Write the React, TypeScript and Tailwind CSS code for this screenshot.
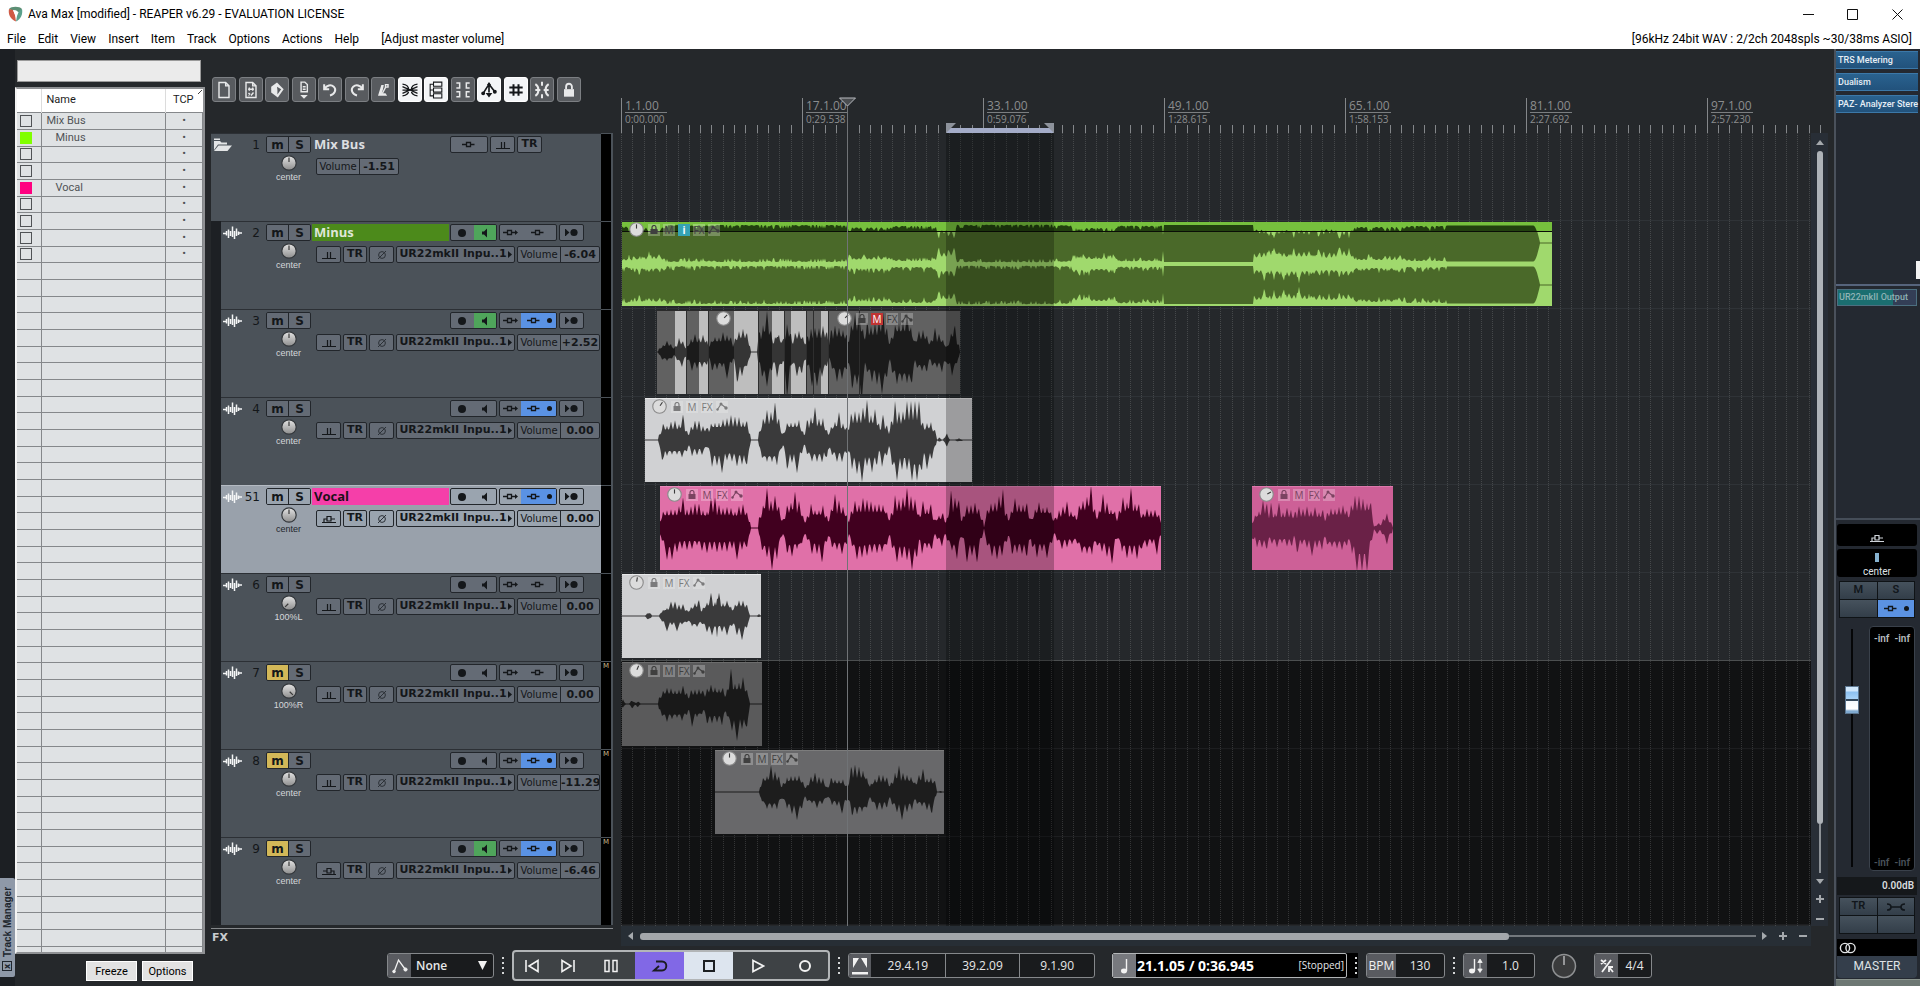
import { ReactNode } from "react";

type Blob = [number, number, number];

type Clip = {
  start: number;
  width: number;
  kind: "minus" | "light" | "mid" | "dark" | "pink" | "pinkMuted" | "split";
  angle: number;
  blobs: Blob[];
  seed: number;
};

type Track = {
  num: string;
  name?: string;
  folder?: boolean;
  selected?: boolean;
  muted?: boolean;
  monitor?: boolean;
  fx?: boolean;
  pan: string;
  angle: number;
  env: "trim" | "latch" | "touch";
  volume: string;
  clips: Clip[];
};

const BAR = 11.31;

const noise = (n: number) => {
  const v = Math.sin(n * 127.1 + 311.7) * 43758.5453;
  return v - Math.floor(v);
};

// amplitude of a clip at a timeline position, blobs are [from, to, peak]
const ampAt = (x: number, blobs: Blob[]) => {
  let amp = 0;
  for (const [from, to, peak] of blobs) {
    if (x < from || x > to) continue;
    const edge = Math.min(x - from, to - x) / Math.min(5, (to - from) / 2);
    amp = Math.max(amp, peak * Math.min(1, 0.35 + 0.65 * edge));
  }
  return amp;
};

// narrow peaks a few pixels apart, every cell has a height of its own
const spike = (x: number, cell: number, seed: number) => {
  const index = Math.floor(x / cell);
  const n = noise(index + seed * 13);
  const peak = n > 0.85 ? 1.22 : 0.66 + 0.4 * n;
  const away = Math.abs((x % cell) - Math.floor(cell / 2)) / (cell / 2);
  return Math.max(peak * (1 - 0.5 * away), 0.5);
};

const wavePath = (clip: Clip, mid: number) => {
  const up: string[] = [];
  const down: string[] = [];
  for (let x = 0; x <= clip.width; x++) {
    const t = clip.start + x;
    const amp = ampAt(t, clip.blobs);
    const a = amp * spike(t, 4, clip.seed);
    const b = amp * spike(t + 1, 5, clip.seed + 1) * 1.05;
    up.push(`${x},${(mid - Math.max(0.5, a)).toFixed(1)}`);
    down.unshift(`${x},${(mid + Math.max(0.5, b)).toFixed(1)}`);
  }
  return `M${up.join("L")}L${down.join("L")}Z`;
};

const minusBlobs: Blob[] = [
  [0, 12, 5], [12, 44, 8], [44, 226, 2.5], [226, 270, 8], [270, 315, 4.5], [315, 334, 14], [334, 432, 2],
  [432, 450, 3], [450, 496, 9], [496, 541, 4], [541, 632, 1], [632, 650, 12], [650, 690, 14],
  [690, 715, 12], [715, 732, 14], [732, 780, 7], [780, 825, 4.5], [825, 917, 1.5],
];

// loud mastered material: the wave fills each channel and leaves only a gap at the edges
const channelPath = (width: number, mid: number, seed: number) => {
  const up: string[] = [];
  const down: string[] = [];
  for (let x = 0; x <= width; x++) {
    let gap = 1;
    for (const [from, to, g] of minusBlobs) {
      if (x >= from && x < to) gap = g;
    }
    const jump = gap > 1.5 && noise(x * 7 + seed) > 0.82 ? 3 : 0;
    gap = gap * (gap > 1.5 ? 0.9 * spike(x, 5, seed) : 1) + jump + 0.9;
    if (x === 541) gap = 13;
    if (x > 911) gap = Math.min(20.4, gap + Math.pow(x - 911, 2) / 2.5);
    const h = Math.max(0.5, 21 - gap);
    up.push(`${x},${(mid - h).toFixed(1)}`);
    down.unshift(`${x},${(mid + h).toFixed(1)}`);
  }
  return `M${up.join("L")}L${down.join("L")}Z`;
};

const vocalBlobs: Blob[] = [
  [38, 129, 25], [138, 161, 33], [162, 184, 30], [185, 207, 27], [207, 228, 28], [228, 269, 31],
  [269, 300, 33], [296, 314, 28], [312, 326, 18], [325, 341, 31], [340, 362, 27], [364, 387, 32],
  [387, 410, 31], [410, 433, 30], [433, 458, 22], [455, 476, 35], [474, 497, 28], [496, 522, 33],
  [519, 541, 21],
];

const tracks: Track[] = [
  { num: "1", name: "Mix Bus", folder: true, pan: "center", angle: 0, env: "trim", volume: "-1.51", clips: [] },
  {
    num: "2", name: "Minus", monitor: true, pan: "center", angle: 0, env: "trim", volume: "-6.04",
    clips: [{ start: 1, width: 930, kind: "minus", angle: 0, seed: 3, blobs: [] }],
  },
  {
    num: "3", monitor: true, fx: true, pan: "center", angle: 0, env: "trim", volume: "+2.52",
    clips: [{
      start: 36, width: 303, kind: "split", angle: 45, seed: 11,
      blobs: [
        [38, 54, 12], [53, 66, 15], [65, 89, 19], [87, 113, 21], [112, 129, 27], [137, 153, 34],
        [151, 162, 30], [162, 171, 38], [170, 185, 26], [185, 208, 27], [208, 228, 30], [227, 245, 42],
        [243, 269, 33], [270, 294, 41], [292, 310, 25], [308, 326, 20], [326, 338, 25],
      ],
    }],
  },
  {
    num: "4", fx: true, pan: "center", angle: 0, env: "trim", volume: "0.00",
    clips: [{
      start: 24, width: 327, kind: "light", angle: 35, seed: 23,
      blobs: [
        [38, 68, 21], [66, 88, 16], [86, 129, 26], [138, 161, 31], [162, 183, 26], [184, 207, 27],
        [207, 228, 23], [226, 260, 33], [256, 269, 21], [269, 304, 32], [300, 315, 23], [317, 320, 4],
        [323, 328, 8], [334, 342, 2],
      ],
    }],
  },
  {
    num: "51", name: "Vocal", selected: true, fx: true, pan: "center", angle: 0, env: "touch", volume: "0.00",
    clips: [
      { start: 39, width: 501, kind: "pink", angle: 0, seed: 31, blobs: vocalBlobs },
      {
        start: 631, width: 141, kind: "pinkMuted", angle: 60, seed: 47,
        blobs: [[631, 650, 23], [645, 675, 21], [672, 706, 22], [704, 730, 26], [726, 752, 34], [752, 761, 5], [760, 771, 16]],
      },
    ],
  },
  {
    num: "6", pan: "100%L", angle: -135, env: "trim", volume: "0.00",
    clips: [{
      start: 1, width: 139, kind: "light", angle: 10, seed: 53,
      blobs: [[25, 30, 5], [39, 68, 12], [66, 82, 15], [80, 113, 19], [94, 98, 28], [110, 128, 19], [136, 140, 2]],
    }],
  },
  {
    num: "7", muted: true, pan: "100%R", angle: 135, env: "trim", volume: "0.00",
    clips: [{
      start: 1, width: 140, kind: "dark", angle: 25, seed: 61,
      blobs: [[0, 4, 6], [9, 14, 5], [15, 19, 4], [38, 68, 20], [66, 84, 18], [82, 106, 23], [104, 128, 29]],
    }],
  },
  {
    num: "8", muted: true, fx: true, pan: "center", angle: 0, env: "trim", volume: "-11.29",
    clips: [{
      start: 94, width: 229, kind: "mid", angle: 0, seed: 71,
      blobs: [
        [139, 161, 22], [161, 184, 22], [184, 207, 16], [206, 227, 17], [227, 249, 28], [248, 270, 19],
        [269, 296, 22], [292, 315, 19], [318, 321, 2],
      ],
    }],
  },
  { num: "9", muted: true, monitor: true, fx: true, pan: "center", angle: 0, env: "latch", volume: "-6.46", clips: [] },
];

const rulerMarks = [
  { bar: 0, pos: "1.1.00", time: "0:00.000" },
  { bar: 16, pos: "17.1.00", time: "0:29.538" },
  { bar: 32, pos: "33.1.00", time: "0:59.076" },
  { bar: 48, pos: "49.1.00", time: "1:28.615" },
  { bar: 64, pos: "65.1.00", time: "1:58.153" },
  { bar: 80, pos: "81.1.00", time: "2:27.692" },
  { bar: 96, pos: "97.1.00", time: "2:57.230" },
];

const bars = Array.from({ length: 107 }, (_, i) => i);

const managerRows = [
  { name: "Mix Bus" },
  { name: "Minus", color: "green" },
  {},
  {},
  { name: "Vocal", color: "pink" },
  {}, {}, {}, {},
] as { name?: string; color?: string }[];

/* ---------- small drawings ---------- */

function Knob({ angle, size, flat }: { angle: number; size: number; flat?: boolean }) {
  return (
    <svg width={size} height={size} viewBox="0 0 16 16" className="block">
      <defs>
        <linearGradient id="knob" x1="0" y1="0" x2="0" y2="1">
          <stop offset="0" stopColor="#e4e4e4" />
          <stop offset="1" stopColor="#8d8d8d" />
        </linearGradient>
      </defs>
      <circle cx="8" cy="8" r="7.2" fill={flat ? "#dcdcdc" : "url(#knob)"} stroke={flat ? "#8b8b8b" : "#33373b"} strokeWidth="1.2" />
      <line x1="8" y1="7" x2="8" y2="2.5" stroke="#3a3a3a" strokeWidth="1.2" transform={`rotate(${angle} 8 8)`} />
    </svg>
  );
}

function EnvIcon({ mode }: { mode: Track["env"] }) {
  return (
    <svg width="16" height="12" viewBox="0 0 16 12" fill="none" stroke="currentColor" strokeWidth="1.2">
      {mode === "trim" && <path d="M1 9.5H15M6.5 9V3M9.5 9V3" />}
      {mode === "touch" && <path d="M1 9.5H15M3 9V6H6M6 3.5H10V8H6ZM10 6H14" />}
      {mode === "latch" && <path d="M1 9.5H15M2 6H6M6 3.5H10V8H6ZM10 6H13V9" />}
    </svg>
  );
}

function FxNode({ arrow }: { arrow?: boolean }) {
  return (
    <svg width="17" height="9" viewBox="0 0 17 9" fill="none" stroke="currentColor" strokeWidth="1.3">
      <path d="M1 4.5H5M5.5 2.5H9.5V6.5H5.5ZM10 4.5H13.5" />
      {arrow && <path d="M13 2L16 4.5L13 7Z" fill="currentColor" stroke="none" />}
    </svg>
  );
}

function WaveGlyph() {
  return (
    <svg width="19" height="14" viewBox="0 0 19 14" stroke="#f4f5f6" strokeWidth="1.5" fill="none">
      <path d="M0 7.5H3M3.5 5V9.5M5.5 3.5V12M7.5 5V10M9.5 0.5V11M11.5 5V13M13.5 2.5V10M15.5 5.5V9M16 7H19" />
    </svg>
  );
}

function FolderGlyph() {
  return (
    <svg width="20" height="14" viewBox="0 0 20 14" fill="#e3e5e6">
      <path d="M1 3H7L8.5 4.5H14V6.5H5L1 12Z" />
      <path d="M5.5 7.5H19L14.5 13H1Z" />
      <path d="M1 0.5H7V2H1Z" />
    </svg>
  );
}

function LockGlyph() {
  return (
    <svg width="8" height="9" viewBox="0 0 8 9" fill="currentColor">
      <path d="M0.5 4H7.5V9H0.5Z" />
      <path d="M2 4V2.5A2 2 0 0 1 6 2.5V4" fill="none" stroke="currentColor" strokeWidth="1.2" />
    </svg>
  );
}

function NodesGlyph() {
  return (
    <svg width="12" height="9" viewBox="0 0 12 9" fill="currentColor" stroke="currentColor">
      <path d="M1.5 7.5L5 2L9.5 5.5" fill="none" strokeWidth="1.1" />
      <circle cx="1.5" cy="7.5" r="1.2" stroke="none" />
      <circle cx="5" cy="2" r="1.5" stroke="none" />
      <circle cx="10" cy="6" r="1.7" stroke="none" />
    </svg>
  );
}

function NoteGlyph({ arrows }: { arrows?: boolean }) {
  return (
    <svg width="18" height="18" viewBox="0 0 18 18" fill="#f2f2f2" stroke="#f2f2f2">
      <ellipse cx={arrows ? 5 : 8} cy="14" rx="3" ry="2.4" stroke="none" />
      <path d={arrows ? "M7.5 14V2" : "M10.5 14V2"} strokeWidth="1.4" />
      {arrows && <path d="M13 4V13M10.8 5.5L13 2L15.2 5.5ZM10.8 12L13 15.5L15.2 12Z" strokeWidth="0.8" />}
    </svg>
  );
}

/* ---------- top toolbar ---------- */

const tools: { label: string; on?: boolean; art: ReactNode }[] = [
  { label: "New project", art: <path d="M6 3H14L18 7V21H6ZM14 3V7H18" /> },
  { label: "Project settings", art: <path d="M6 3H14L18 7V21H6ZM14 3V7H18M10 9V13M14 9V13M8.5 11H15.5M9 15.5L11 17.5M15 15L12 18.5M9 18.5H10" /> },
  { label: "Open project", art: <><path d="M5 8L12 3L20 11L13 21L5 15Z" fill="currentColor" stroke="none" /><path d="M12 8L17 11L12.5 17.5V12Z" fill="#585b5f" stroke="none" /></> },
  { label: "Save project", art: <><path d="M8.5 2.5H13L16 5.5V14H8.5ZM10.5 8H14M10.5 11H14" /><path d="M7.5 18H16.5L12 22.5Z" fill="currentColor" stroke="none" /></> },
  { label: "Undo", art: <path d="M5 5V11H11M5.5 10.5C8 6.5 13 5 16.5 8C20 11.5 18 17 12 18.5" strokeWidth="2.4" /> },
  { label: "Redo", art: <path d="M19 5V11H13M18.5 10.5C16 6.5 11 5 7.5 8C4 11.5 6 17 12 18.5" strokeWidth="2.4" /> },
  { label: "Metronome", art: <><path d="M10 6H13L12 11L10.5 16H15L17 19H6Z" fill="currentColor" stroke="none" /><path d="M11 16.5L15.5 8M15 5.5H18V8.5H15Z" /></> },
  { label: "Auto crossfade", on: true, art: <path d="M3 5C13 6 13 18 3 19M21 5C11 6 11 18 21 19M3 12H21M3 8L21 16M3 16L21 8" strokeWidth="1.5" /> },
  { label: "Item grouping", on: true, art: <path d="M9 2.5H19V7.5H9ZM9 9.5H19V14.5H9ZM9 16.5H19V21.5H9ZM9 5H5V19H9M5 12H9" strokeWidth="1.3" /> },
  { label: "Ripple editing", art: <path d="M4 3.5H8V9.5H4M4 14H8V20H4M20 3.5H16V9.5H20M20 14H16V20H20" strokeWidth="1.8" /> },
  { label: "Move envelope points", on: true, art: <><path d="M5 16L12 5L19 14M12 6V15" strokeWidth="2" /><path d="M12 21L8 15.5H16ZM12 2.5L14.5 6H9.5Z" fill="currentColor" stroke="none" /><circle cx="5" cy="16" r="1.5" fill="currentColor" /><circle cx="19" cy="14" r="1.5" fill="currentColor" /></> },
  { label: "Grid lines", on: true, art: <path d="M9 5V19M15 5V19M4 9H20M4 15H20" strokeWidth="2.4" /> },
  { label: "Snap", art: <path d="M4 5C9 8 9 16 4 19M20 5C15 8 15 16 20 19M12 2V7M12 17V22M4 12H10M14 12H20" strokeWidth="2.4" /> },
  { label: "Lock", art: <><path d="M6 11H18V20H6Z" fill="currentColor" stroke="none" /><path d="M8.5 11V8A3.5 3.5 0 0 1 15.5 8V11" strokeWidth="2.2" /></> },
];

function Toolbar() {
  return (
    <div className="flex w-[414px] shrink-0 items-start pt-7 pl-[5px]">
      <div className="flex w-[369px] justify-between">
        {tools.map((tool) => (
          <button
            key={tool.label}
            aria-label={tool.label}
            className={`flex h-[25px] w-6 items-center justify-center rounded-[3px] border ${
              tool.on ? "border-white bg-[#f3f5f7] text-[#14171a]" : "border-[#7c7f83] bg-[#585b5f] text-[#e8e9ea]"
            }`}
          >
            <svg width="20" height="20" viewBox="0 0 24 24" fill="none" stroke="currentColor" strokeWidth="1.7">
              {tool.art}
            </svg>
          </button>
        ))}
      </div>
    </div>
  );
}

/* ---------- track control panel ---------- */

function Cell({ className, label, children }: { className: string; label: string; children: ReactNode }) {
  return (
    <button aria-label={label} className={`flex h-[17px] items-center justify-center rounded-[2px] border border-[#22262b] ${className}`}>
      {children}
    </button>
  );
}

function TrackPanel({ track }: { track: Track }) {
  const face = track.selected ? "bg-[#9aa4af]" : "bg-[#646b75]";
  const volume = (
    <div className={`flex h-[17px] w-[83px] overflow-hidden rounded-[2px] border border-[#22262b] ${face}`}>
      <span className="w-[43px] shrink-0 border-r border-[#22262b] text-center text-[10px] leading-[15px]">Volume</span>
      <span className="flex-1 text-center text-[11px] leading-[15px] font-bold whitespace-nowrap">{track.volume}</span>
    </div>
  );

  return (
    <div className={`flex h-22 ${track.folder ? "" : "pl-[10px]"}`}>
      <div
        className={`flex flex-1 border-t text-[#14171a] ${
          track.selected ? "border-[#b4bac2] bg-[#99a1ab]" : "border-[#2c3035] bg-[#4b5259]"
        }`}
      >
        <div className={`flex h-5 items-center justify-between pt-0.5 pr-[6px] pl-[2px] ${track.folder ? "w-[55px]" : "w-[45px]"}`}>
          {track.folder ? <FolderGlyph /> : <WaveGlyph />}
          <span className="text-[12px] leading-4">{track.num}</span>
        </div>
        <div className="flex w-[45px] flex-col items-center pt-0.5">
          <div className="flex h-[17px] w-full overflow-hidden rounded-[2px] border border-[#22262b] text-[12px] leading-[14px] font-bold">
            <button aria-label="Mute" className={`flex-1 border-r border-[#22262b] ${track.muted ? "bg-[#d3b858]" : face}`}>m</button>
            <button aria-label="Solo" className={`flex-1 ${face}`}>S</button>
          </div>
          <button aria-label="Pan" className="mt-[2px]"><Knob angle={track.angle} size={16} /></button>
          <span className={`font-['Liberation_Sans',sans-serif] text-[9px] leading-3 ${track.selected ? "text-[#22262b]" : "text-[#d5d7d9]"}`}>{track.pan}</span>
        </div>
        <div className="ml-px flex flex-col gap-[5px] pt-0.5">
          <div className="flex">
            <span
              className={`mr-px h-[17px] w-[137px] pl-[2px] font-['Open_Sans',sans-serif] text-[13px] leading-[17px] font-bold ${
                track.name === "Minus"
                  ? "bg-[#4c8a1b] text-[#dfe6d8]"
                  : track.name === "Vocal"
                    ? "bg-[#f53fa9] text-[#1d1018]"
                    : "text-[#dcdee0]"
              }`}
            >
              {track.name}
            </span>
            {track.folder ? (
              <div className="flex gap-[2px]">
                <Cell label="FX" className={`w-[38px] ${face}`}><FxNode /></Cell>
                <Cell label="Envelope" className={`w-[25px] ${face}`}><EnvIcon mode="trim" /></Cell>
                <Cell label="Trim mode" className={`w-[25px] text-[11px] font-bold ${face}`}>TR</Cell>
              </div>
            ) : (
              <div className="flex gap-[2px]">
                <div className={`flex h-[17px] w-[47px] overflow-hidden rounded-[2px] border border-[#22262b] ${face}`}>
                  <button aria-label="Record arm" className="flex flex-1 items-center justify-center">
                    <span className="size-2 rounded-full bg-[#14171a]" />
                  </button>
                  <button aria-label="Monitor" className={`flex flex-1 items-center justify-center ${track.monitor ? "bg-[#4fa55b]" : ""}`}>
                    <svg width="8" height="10" viewBox="0 0 8 10" fill="#14171a"><path d="M1 3.5H3L6 0.5V9.5L3 6.5H1Z" /></svg>
                  </button>
                </div>
                <div className={`flex h-[17px] w-[58px] overflow-hidden rounded-[2px] border border-[#22262b] ${face}`}>
                  <button aria-label="Routing" className="flex w-[21px] items-center justify-center"><FxNode arrow /></button>
                  <button aria-label="Effects" className={`flex flex-1 items-center justify-center gap-1 ${track.fx ? "bg-[#5a92e4]" : ""}`}>
                    <FxNode />
                    {track.fx && <span className="size-[5px] rounded-full bg-[#14171a]" />}
                  </button>
                </div>
                <Cell label="Record mode" className={`w-[25px] ${face}`}>
                  <svg width="14" height="9" viewBox="0 0 14 9" fill="#14171a">
                    <path d="M0 1H1.2V8H0ZM1 1.5L4.5 4.5L1 7.5Z" /><circle cx="9" cy="4.5" r="3.6" />
                  </svg>
                </Cell>
              </div>
            )}
          </div>
          <div className="flex gap-[2px] pl-1">
            {!track.folder && (
              <>
                <Cell label="Envelope" className={`w-[25px] ${face}`}><EnvIcon mode={track.env} /></Cell>
                <Cell label="Trim mode" className={`w-6 text-[11px] font-bold ${face}`}>TR</Cell>
                <Cell label="Phase" className={`w-[25px] text-[11px] ${face}`}>
                  <svg width="10" height="10" viewBox="0 0 10 10" fill="none" stroke="#2b3036" strokeWidth="1"><circle cx="5" cy="5" r="3.4" /><path d="M1 9L9 1" /></svg>
                </Cell>
                <Cell label="Input" className={`w-[119px] gap-px text-[11px] font-bold whitespace-nowrap ${face}`}>
                  UR22mkII Inpu..1
                  <svg width="4" height="7" viewBox="0 0 4 7" fill="#14171a"><path d="M0 0L4 3.5L0 7Z" /></svg>
                </Cell>
              </>
            )}
            {volume}
          </div>
        </div>
      </div>
      <div className="h-full w-3 border-t border-r-2 border-[#4b5259] bg-black text-center text-[7px] leading-[9px] text-[#c7b98a]">
        {track.muted ? "M" : ""}
      </div>
    </div>
  );
}

/* ---------- arrange view ---------- */

const kindStyle: Record<Clip["kind"], string> = {
  minus: "border-[#8fd158] bg-[#a0d96d]",
  light: "border-[#e8e9ea] bg-[#d0d1d3]",
  mid: "border-[#7c7c7c] bg-[#68686a]",
  dark: "border-[#6c6c6c] bg-[#5a5a5b]",
  pink: "border-[#e88abb] bg-[#e070a8]",
  pinkMuted: "border-[#dd78ac] bg-[#cd6097]",
  split: "border-[#2a2a2a] bg-[#616161]",
};

const splitLight: [number, number][] = [[18, 11], [42, 9], [77, 24], [115, 12], [134, 15], [164, 7]];
const splitCuts = [29, 51, 101, 127, 149, 156, 171, 202];

function ClipButtons({ kind, angle }: { kind: Clip["kind"]; angle: number }) {
  const box = "flex size-3 items-center justify-center font-['Open_Sans',sans-serif] text-[10px] leading-3";
  const face = kind === "light" ? "bg-white/20 text-[#7b7b7c]" : kind === "pink" || kind === "pinkMuted" ? "bg-white/25 text-[#7b4361]" : "bg-white/25 text-[#3f3f3f]";
  return (
    <div className={`absolute top-0 flex items-center gap-[3px] ${kind === "split" ? "left-[180px]" : "left-[7px]"}`}>
      <span className="mr-[1px]"><Knob angle={angle} size={15} flat /></span>
      <button aria-label="Lock item" className={`${box} ${face}`}><LockGlyph /></button>
      <button aria-label="Mute item" className={`${box} ${kind === "split" ? "bg-[#c03434] text-white" : face}`}>M</button>
      {kind === "minus" && <button aria-label="Notes" className={`${box} bg-[#35a3b4] font-bold text-white`}>i</button>}
      <button aria-label="Item FX" className={`${box} ${face}`}>FX</button>
      <button aria-label="Item envelopes" className={`${box} ${face}`}><NodesGlyph /></button>
    </div>
  );
}

function ClipView({ clip }: { clip: Clip }) {
  const waveFill = clip.kind === "pink" ? "#41001f" : clip.kind === "pinkMuted" ? "#6a2147" : "#000";
  return (
    <div
      className={`absolute top-px h-[84px] overflow-hidden ${clip.kind === "minus" ? "" : "border-t"} ${kindStyle[clip.kind]}`}
      style={{ left: clip.start, width: clip.width }}
    >
      <svg width={clip.width} height="84" className="block">
        {clip.kind === "minus" ? (
          <>
            <path d={channelPath(clip.width, 21, 5)} fill="#4a6929" />
            <path d={channelPath(clip.width, 63, 9)} fill="#4a6929" />
            <clipPath id="aboveVolume"><rect width={clip.width} height="10" /></clipPath>
            <g clipPath="url(#aboveVolume)">
              <rect width={clip.width} height="10" fill="#76c03d" />
              <path d={channelPath(clip.width, 22, 5)} fill="#22400f" />
            </g>
            <rect y="9" width={clip.width} height="1" fill="#0a0d07" />
          </>
        ) : (
          <>
            {clip.kind === "split" && splitLight.map(([x, w]) => <rect key={x} x={x} width={w} height="84" fill="#bebebe" />)}
            <path d={wavePath(clip, 41)} fill={waveFill} opacity={waveFill === "#000" ? 0.72 : 1} />
            {clip.kind === "split" && splitCuts.map((x) => <rect key={x} x={x} width="1" height="84" fill="#2e2e2e" />)}
          </>
        )}
      </svg>
      {clip.kind === "split" && <span className="absolute top-0 left-[59px]"><Knob angle={45} size={15} flat /></span>}
      <ClipButtons kind={clip.kind} angle={clip.angle} />
    </div>
  );
}

function Ruler() {
  return (
    <div className="relative flex-1 overflow-hidden font-['Open_Sans',sans-serif] text-[#8b8d8e]">
      {bars.map((bar) => (
        <span key={bar} className={`absolute bottom-0 w-px bg-[#84878a] ${bar % 16 === 0 ? "h-[35px]" : "h-2"}`} style={{ left: Math.round(bar * BAR) }} />
      ))}
      {rulerMarks.map((mark) => (
        <div key={mark.bar} className="absolute top-[50px] w-[42px] whitespace-nowrap" style={{ left: Math.round(mark.bar * BAR) + 4 }}>
          <div className="border-b border-[#7b7e80] text-[12px] leading-[13px]">{mark.pos}</div>
          <div className="text-[10px] leading-[13px]">{mark.time}</div>
        </div>
      ))}
      <div className="absolute bottom-0 left-[325px] h-[5px] w-[108px] bg-[#a4acc8]" />
      <svg className="absolute bottom-0 left-[325px]" width="108" height="10" fill="#8d929b"><path d="M0 0H10L1 9V10H0ZM108 0H98L107 9V10H108Z" /></svg>
      <svg className="absolute bottom-0 left-[217px]" width="19" height="36" fill="none">
        <path d="M1.5 1H17.5L9.5 9Z" fill="#4a4d50" stroke="#b9bbc0" /><path d="M9.5 9V36" stroke="#707376" />
      </svg>
    </div>
  );
}

function Arrange() {
  return (
    <div className="relative min-w-0 flex-1 overflow-hidden bg-[#25282b]">
      {tracks.map((track, i) => (
        <div key={track.num} className={`h-22 border-b ${i > 5 ? "border-[#1d1e20] bg-[#111213]" : i === 5 ? "border-[#4c4f50]" : "border-[#2f3337]"}`} />
      ))}
      <svg className="absolute inset-0 size-full">
        {bars.map((bar) => (
          <line key={bar} x1={Math.round(bar * BAR) + 0.5} x2={Math.round(bar * BAR) + 0.5} y1="0" y2="100%" stroke="#fff" strokeOpacity="0.15" strokeDasharray="1 1" />
        ))}
      </svg>
      <div className="absolute inset-x-0 top-0">
        {tracks.map((track) => (
          <div key={track.num} className="relative h-22">
            {track.clips.map((clip) => <ClipView key={clip.start} clip={clip} />)}
          </div>
        ))}
      </div>
      <div className="absolute inset-y-0 left-[325px] w-[108px] bg-black/25" />
      <div className="absolute inset-y-0 left-[226px] w-px bg-[#707376]" />
    </div>
  );
}

/* ---------- transport ---------- */

function Dots() {
  return (
    <span className="flex w-[18px] flex-col items-center gap-[3px]">
      {[0, 1, 2, 3].map((i) => <i key={i} className="size-[2px] bg-[#d3d5d6]" />)}
    </span>
  );
}

const boxEdge = "flex h-[25px] overflow-hidden rounded-[3px] border border-[#85888b] bg-[#191b1d]";
const iconFace = "flex items-center justify-center bg-[#595b60] text-[#f2f2f2]";

function Transport() {
  const key = "flex items-center justify-center text-[#f2f2f2]";
  return (
    <div className="flex h-10 items-center pb-px pl-[180px] font-['Open_Sans',sans-serif] text-[13px] text-[#e6e7e8]">
      <div className={`${boxEdge} relative w-[107px]`}>
        <span className={`${iconFace} w-[23px]`}>
          <svg width="18" height="18" viewBox="0 0 18 18" fill="#f2f2f2" stroke="#f2f2f2"><path d="M3 15L7.5 3L14 12" fill="none" strokeWidth="1.3" /><circle cx="3" cy="14.5" r="1.3" /><circle cx="14.5" cy="12.5" r="1.6" /></svg>
        </span>
        <select aria-label="Automation override" className="flex-1 appearance-none pl-[5px] text-[12px] font-semibold">
          <option>None</option>
        </select>
        <svg className="pointer-events-none absolute top-[7px] right-[6px]" width="9" height="9" fill="#f2f2f2"><path d="M0 0H9L4.5 9Z" /></svg>
      </div>
      <Dots />
      <div className="flex h-[31px] w-[318px] overflow-hidden rounded-[4px] border-2 border-[#b2b5b7] bg-[#3e4245]">
        <button aria-label="Go to start" className={`${key} w-9`}>
          <svg width="16" height="16" viewBox="0 0 16 16" fill="none" stroke="currentColor" strokeWidth="1.6"><path d="M2 2V14M14 2.5V13.5L5 8Z" /></svg>
        </button>
        <button aria-label="Go to end" className={`${key} w-9`}>
          <svg width="16" height="16" viewBox="0 0 16 16" fill="none" stroke="currentColor" strokeWidth="1.6"><path d="M14 2V14M2 2.5V13.5L11 8Z" /></svg>
        </button>
        <button aria-label="Pause" className={`${key} w-[49px]`}>
          <svg width="16" height="16" viewBox="0 0 16 16" fill="none" stroke="currentColor" strokeWidth="1.5"><path d="M2 2.5H6V13.5H2ZM10 2.5H14V13.5H10Z" /></svg>
        </button>
        <button aria-label="Repeat" className="flex w-[49px] items-center justify-center bg-[#8168e6] text-[#1c1c22]">
          <svg width="18" height="16" viewBox="0 0 18 16" fill="none" stroke="currentColor" strokeWidth="1.9"><path d="M5 3.5H11C17 3.5 16.5 12.5 11 12.5H3L8 8" /></svg>
        </button>
        <button aria-label="Stop" className="flex w-[49px] items-center justify-center bg-[#dde5ef]">
          <span className="size-3 border-2 border-[#1c1f22]" />
        </button>
        <button aria-label="Play" className={`${key} w-[49px]`}>
          <svg width="16" height="16" viewBox="0 0 16 16" fill="none" stroke="currentColor" strokeWidth="1.7"><path d="M3 2.5L13.5 8L3 13.5Z" /></svg>
        </button>
        <button aria-label="Record" className={`${key} flex-1`}>
          <span className="size-3 rounded-full border-2 border-[#f2f2f2]" />
        </button>
      </div>
      <Dots />
      <div className={`${boxEdge} w-[247px] text-[12px]`}>
        <span className={`${iconFace} w-[22px]`}>
          <svg width="18" height="20" viewBox="0 0 18 20" fill="#f2f2f2"><path d="M2 12V2H8ZM16 12V2H10Z" /><path d="M1 16H17V18.5H1Z" /></svg>
        </span>
        <span className="flex-1 border-r border-[#85888b] text-center leading-[24px]">29.4.19</span>
        <span className="flex-1 border-r border-[#85888b] text-center leading-[24px]">39.2.09</span>
        <span className="flex-1 text-center leading-[24px]">9.1.90</span>
      </div>
      <div className="ml-[17px] flex h-[25px] items-center bg-black pr-px">
        <div className="flex h-[25px] w-[235px] overflow-hidden rounded-[2px] border border-[#b2b5b7] bg-black">
          <span className="flex w-[23px] items-center justify-center bg-[#77797e]"><NoteGlyph /></span>
          <span className="flex-1 pl-px text-[14px] leading-[23px] font-bold whitespace-nowrap text-white">21.1.05 / 0:36.945</span>
          <span className="pr-0.5 text-[10px] leading-[23px]">[Stopped]</span>
        </div>
        <span className="-mr-2"><Dots /></span>
      </div>
      <div className={`${boxEdge} ml-2 w-[79px]`}>
        <span className={`${iconFace} w-[29px] text-[12px]`}>BPM</span>
        <span className="flex-1 text-center text-[12px] leading-[23px]">130</span>
      </div>
      <Dots />
      <div className={`${boxEdge} w-[72px]`}>
        <span className={`${iconFace} w-[23px]`}><NoteGlyph arrows /></span>
        <span className="flex-1 text-center text-[12px] leading-[23px]">1.0</span>
      </div>
      <button aria-label="Play rate" className="ml-4">
        <svg width="26" height="26" viewBox="0 0 26 26"><circle cx="13" cy="13" r="11.5" fill="#3a3b3c" stroke="#8f9193" strokeWidth="1.5" /><path d="M13 12V3" stroke="#b5b6b7" strokeWidth="1.5" /></svg>
      </button>
      <div className={`${boxEdge} ml-[17px] w-[58px]`}>
        <span className={`${iconFace} w-[23px]`}>
          <svg width="16" height="16" viewBox="0 0 16 16" fill="none" stroke="#f2f2f2" strokeWidth="1.8"><path d="M3 14L12 2M2 2L7 6M7 2L2 6M14 9H10V14M10 9L14 14" /></svg>
        </span>
        <span className="flex-1 text-center text-[12px] leading-[23px]">4/4</span>
      </div>
    </div>
  );
}

/* ---------- master strip ---------- */

function Master() {
  const half = "flex h-[17px] items-center justify-center bg-linear-to-b from-[#46525d] to-[#333e49] text-[11px] font-semibold text-[#11161b]";
  return (
    <div className="flex w-[86px] shrink-0 flex-col border-l-2 border-[#4a515b] bg-[#242931] font-[Roboto,sans-serif]">
      <div className="flex h-[237px] flex-col gap-1 border-b-2 border-[#56647c] pt-0.5 pr-0.5">
        {["TRS Metering", "Dualism", "PAZ- Analyzer Stere"].map((fx) => (
          <button key={fx} className="h-[18px] border-y border-[#3c78a8] bg-linear-to-b from-[#2a628f] to-[#22527c] pl-0.5 text-left text-[9px] leading-4 font-medium whitespace-nowrap text-[#e6eef5]">
            {fx}
          </button>
        ))}
        <span className="mt-36 -mr-0.5 h-[18px] w-1 self-end bg-[#f4f4f4]" />
      </div>
      <div className="h-[234px] border-b-2 border-[#454d58] pt-[3px] pr-[3px] pl-px">
        <button className="flex h-[17px] w-full items-center border border-[#4c6f80] bg-linear-to-r from-[#1b6e70] from-70% to-[#333e56] to-70% pl-px text-[9px] font-medium whitespace-nowrap text-[#8fb3b5]">
          UR22mkII Output
        </button>
      </div>
      <div className="flex flex-col px-px pr-[3px]">
        <button aria-label="Master envelope" className="mt-1 flex h-[22px] items-end justify-center rounded-[3px] bg-black pb-0.5 text-[#cfd4da]"><EnvIcon mode="touch" /></button>
        <div className="mt-[3px] flex h-7 flex-col items-center rounded-[3px] bg-black pt-1 text-[10px] leading-3 text-[#dfe2e5]">
          <span className="mb-1 h-[9px] w-1 shrink-0 bg-[#86b2cf]" />
          center
        </div>
        <div className="mx-0.5 mt-1 grid grid-cols-2 gap-px border border-[#0f1316] bg-[#0f1316]">
          <button className={half}>M</button>
          <button className={half}>S</button>
          <button aria-label="Mono" className={half} />
          <button aria-label="Master FX" className="flex h-[17px] items-center justify-center gap-1 bg-[#5b92e2] text-[#11161b]"><FxNode /><span className="size-[5px] rounded-full bg-[#11161b]" /></button>
        </div>
        <div className="mt-2 flex h-[245px] pr-0.5 pl-2">
          <input
            type="range"
            aria-label="Master volume"
            defaultValue={73}
            className="mt-[3px] h-[238px] w-3.5 appearance-none bg-[linear-gradient(90deg,transparent_6px,#050608_6px,#050608_8px,transparent_8px)] [direction:rtl] [writing-mode:vertical-lr] [&::-webkit-slider-thumb]:h-7 [&::-webkit-slider-thumb]:w-3.5 [&::-webkit-slider-thumb]:appearance-none [&::-webkit-slider-thumb]:border [&::-webkit-slider-thumb]:border-[#5c7690] [&::-webkit-slider-thumb]:bg-[linear-gradient(#cfe6fb_4px,#8cc0f0_5px,#a9d3f8_12px,#33475a_12px,#33475a_14px,#f4f9fd_14px,#ffffff_22px,#7fa9d0_24px)]"
          />
          <div className="ml-auto flex w-[46px] flex-col justify-between rounded-[4px] border border-[#3a414b] bg-black px-1 pt-1 text-[10px] leading-[15px] font-semibold">
            <div className="flex justify-between text-[#b7bbbf]"><span>-inf</span><span>-inf</span></div>
            <div className="flex justify-between text-[#4a525b]"><span>-inf</span><span>-inf</span></div>
          </div>
        </div>
        <div className="mt-1.5 h-[18px] bg-[#15181b] pr-[3px] text-right text-[10px] leading-[18px] font-semibold text-[#d9dcdf]">0.00dB</div>
        <div className="mx-0.5 mt-0.5 grid grid-cols-2 gap-px border border-[#0f1316] bg-[#0f1316]">
          <button className={half}>TR</button>
          <button aria-label="Routing" className={half}>
            <svg width="20" height="8" viewBox="0 0 20 8" fill="none" stroke="#11161b" strokeWidth="1.7"><path d="M5 4H15M1 1C4 1 5 2 5 4C5 6 4 7 1 7M19 1C16 1 15 2 15 4C15 6 16 7 19 7" /></svg>
          </button>
          <button aria-label="Slot 1" className={half} />
          <button aria-label="Slot 2" className={half} />
        </div>
        <div className="mt-[5px] flex h-[17px] items-center bg-black pl-0.5">
          <svg width="18" height="12" viewBox="0 0 18 12" fill="none" stroke="#e4e6e8" strokeWidth="1.4"><circle cx="6" cy="6" r="4.6" /><circle cx="11.5" cy="6" r="4.6" /></svg>
        </div>
        <div className="h-[22px] rounded-b-[4px] bg-[#343e4b] text-center text-[12px] leading-[21px] text-[#dfe2e5]">MASTER</div>
      </div>
      <div className="mt-px flex-1 border-t border-[#8b958f] bg-[#6d7773]" />
    </div>
  );
}

/* ---------- track manager ---------- */

function Manager() {
  const rows = Array.from({ length: 51 }, (_, i) => managerRows[i]);
  return (
    <div className="flex w-48 shrink-0 flex-col pb-[5px]">
      <input aria-label="Filter tracks" className="mt-[11px] ml-0.5 h-[22px] w-[184px] border border-[#9a9a9a] bg-[#ebebeb] px-1 text-[12px]" />
      <div className="mt-[5px] min-h-0 w-[190px] flex-1 overflow-hidden border-2 border-[#8f9194] border-l-[#f4f4f4] bg-[#dfe2e4] font-[Roboto,sans-serif] text-[11px]">
        <table className="w-full table-fixed border-collapse">
          <thead>
            <tr className="h-[23px] bg-white text-left text-[#1c1c1c]">
              <th className="w-6 border-r border-[#dcdcdc] p-0" aria-label="Color" />
              <th className="border-r border-[#dcdcdc] p-0 pl-[5px] font-normal">Name</th>
              <th className="relative w-[37px] p-0 pl-[7px] font-normal">
                TCP
                <svg className="absolute top-px right-px" width="4" height="4" stroke="#444"><path d="M0 4L4 0" /></svg>
              </th>
            </tr>
          </thead>
          <tbody>
            {rows.map((row, i) => (
              <tr key={i} className={`border-t border-[#85888b] text-[#505356] ${i % 3 === 2 ? "h-4" : "h-[17px]"}`}>
                <td className="border-r border-[#85888b] p-0 pl-[3px]">
                  {row && (
                    <input
                      type="checkbox"
                      aria-label={`Track ${i + 1} color`}
                      className={`block size-3 appearance-none ${
                        row.color === "green" ? "bg-[#80ff00]" : row.color === "pink" ? "bg-[#ff0080]" : "border border-[#505356]"
                      }`}
                    />
                  )}
                </td>
                <td className={`border-r border-[#85888b] p-0 leading-[14px] ${row?.name === "Mix Bus" ? "pl-[5px]" : "pl-[14px]"}`}>{row?.name}</td>
                <td className="border-r border-[#85888b] p-0 text-center leading-[14px]">{row ? "•" : ""}</td>
              </tr>
            ))}
          </tbody>
        </table>
      </div>
      <div className="mt-[7px] flex gap-[5px] pl-[71px] font-[Roboto,sans-serif] text-[11px]">
        <button className="h-5 w-[51px] border border-white bg-[#e2e2e2] leading-[17px]">Freeze</button>
        <button className="h-5 w-[51px] border border-white bg-[#e2e2e2] leading-[17px]">Options</button>
      </div>
    </div>
  );
}

const arrowFill = "#a5a9ad";

export default function App() {
  return (
    <div className="flex h-screen flex-col overflow-hidden bg-[#25282b] font-['DejaVu_Sans',sans-serif]">
      <header className="shrink-0 bg-white font-[Roboto,sans-serif] text-[12px] text-black">
        <div className="flex h-7 items-center pl-2">
          <svg width="15" height="16" viewBox="0 0 15 16" className="mr-[5px]">
            <path d="M1 3C3 0 12 0 14 3L12 7L8 4.5L3 4Z" fill="#5c8f75" />
            <path d="M1 3C0 8 2 13 8 15.5L7 9L5 4Z" fill="#cf5a45" />
            <path d="M14 3C15 8 13 13 8 15.5L9 10L11 5Z" fill="#5aa08c" />
            <path d="M5 4L9 5L8 11Z" fill="#fff" />
          </svg>
          <h1>Ava Max [modified] - REAPER v6.29 - EVALUATION LICENSE</h1>
          <div className="ml-auto flex items-center">
            <button aria-label="Minimize" className="flex w-11 justify-center"><svg width="11" height="11" stroke="#111"><path d="M0 5.5H11" /></svg></button>
            <button aria-label="Maximize" className="flex w-11 justify-center"><svg width="11" height="11" stroke="#111" fill="none"><path d="M0.5 0.5H10.5V10.5H0.5Z" /></svg></button>
            <button aria-label="Close" className="flex w-[46px] justify-center"><svg width="11" height="11" stroke="#111"><path d="M0.5 0.5L10.5 10.5M10.5 0.5L0.5 10.5" /></svg></button>
          </div>
        </div>
        <nav className="flex h-[21px] items-center gap-3 pr-2 pl-[7px]">
          {["File", "Edit", "View", "Insert", "Item", "Track", "Options", "Actions", "Help"].map((m) => <button key={m}>{m}</button>)}
          <span className="ml-[10px]">[Adjust master volume]</span>
          <span className="ml-auto">[96kHz 24bit WAV : 2/2ch 2048spls ~30/38ms ASIO]</span>
        </nav>
      </header>

      <div className="flex min-h-0 flex-1">
        <div className="flex w-[15px] shrink-0 flex-col justify-end bg-[#1c1f23] pb-[9px]">
          <button className="flex h-[99px] items-center gap-1 rounded-l-[2px] bg-[#8f99a8] text-[10px] font-bold text-[#20262e] [writing-mode:vertical-rl] rotate-180">
            <span className="mt-[6px] flex size-[10px] items-center justify-center border border-[#20262e] text-[8px] leading-none">x</span>
            <span className="whitespace-nowrap font-['Liberation_Sans',sans-serif]">Track Manager</span>
          </button>
        </div>
        <Manager />

        <main className="flex min-w-0 flex-1 flex-col">
          <div className="flex h-[84px] shrink-0">
            <Toolbar />
            <Ruler />
            <div className="w-3" />
          </div>
          <div className="flex min-h-0 flex-1">
            <div className="w-[414px] shrink-0 overflow-hidden pr-2 pl-1">
              <div className="bg-[#1d2024]">
                {tracks.map((track) => <TrackPanel key={track.num} track={track} />)}
              </div>
            </div>
            <Arrange />
            <div className="mr-[6px] flex w-[17px] shrink-0 flex-col items-center bg-[#282e36] pt-[7px] pb-[3px]">
              <svg width="8" height="5" fill={arrowFill}><path d="M4 0L8 5H0Z" /></svg>
              <div className="mt-[6px] h-[673px] w-[6px] rounded-[3px] bg-[#aeb3b8]" />
              <div className="w-[2px] flex-1 bg-[#8c9196]" />
              <svg className="mt-[6px]" width="8" height="5" fill={arrowFill}><path d="M4 5L8 0H0Z" /></svg>
              <button aria-label="Zoom in vertically" className="mt-[11px]"><svg className="block" width="8" height="8" stroke={arrowFill} strokeWidth="2"><path d="M4 0V8M0 4H8" /></svg></button>
              <button aria-label="Zoom out vertically" className="mt-[12px]"><svg className="block" width="8" height="8" stroke={arrowFill} strokeWidth="2"><path d="M0 4H8" /></svg></button>
            </div>
          </div>
          <div className="flex h-5 shrink-0">
            <div className="w-[414px] shrink-0 pr-2 pl-1">
              <div className="mt-0.5 border-t border-[#85888b] pl-px text-[11px] leading-[17px] font-bold text-[#c9ccce]">FX</div>
            </div>
            <div className="mr-[23px] flex flex-1 items-center bg-[#272e35] pr-1 pl-[7px]">
              <svg width="5" height="8" fill={arrowFill}><path d="M5 0V8L0 4Z" /></svg>
              <div className="ml-[7px] h-[7px] w-[869px] rounded-[3px] bg-[#a3a7ab]" />
              <div className="h-[2px] flex-1 bg-[#73787d]" />
              <svg className="ml-[6px]" width="5" height="8" fill={arrowFill}><path d="M0 0V8L5 4Z" /></svg>
              <button aria-label="Zoom in" className="ml-3"><svg className="block" width="8" height="8" stroke={arrowFill} strokeWidth="2"><path d="M4 0V8M0 4H8" /></svg></button>
              <button aria-label="Zoom out" className="ml-3"><svg className="block" width="8" height="8" stroke={arrowFill} strokeWidth="2"><path d="M0 4H8" /></svg></button>
            </div>
          </div>
          <Transport />
        </main>

        <Master />
      </div>
    </div>
  );
}
